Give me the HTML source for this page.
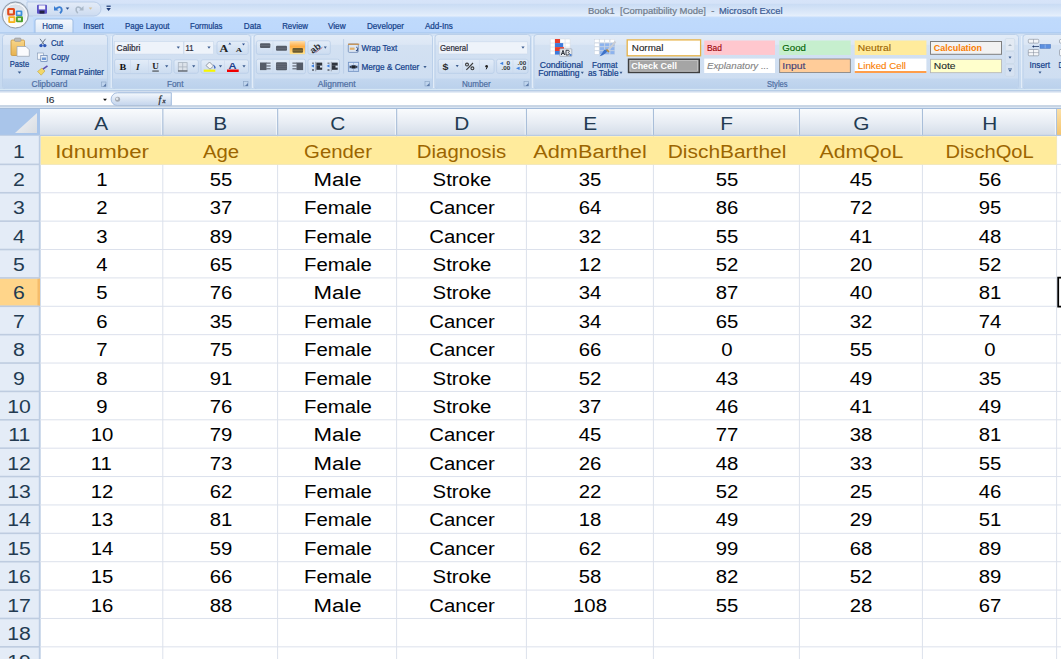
<!DOCTYPE html><html><head><meta charset="utf-8"><style>
*{margin:0;padding:0;box-sizing:border-box}
html,body{width:1061px;height:659px;overflow:hidden;background:#fff;font-family:"Liberation Sans",sans-serif}
.b{position:absolute}
.t{position:absolute;white-space:nowrap;line-height:1;transform-origin:0 0}
svg{position:absolute;left:0;top:0}
svg text{font-family:"Liberation Sans",sans-serif;white-space:pre}
</style></head><body><svg width="1061" height="109" style="left:0;top:0"><defs>
<linearGradient id="gTitle" x1="0" y1="0" x2="0" y2="1"><stop offset="0" stop-color="#D7E4F9"/><stop offset="0.2" stop-color="#D5E3F8"/><stop offset="0.27" stop-color="#CADCF4"/><stop offset="0.85" stop-color="#DFEBFA"/><stop offset="1" stop-color="#E7F0FC"/></linearGradient>
<linearGradient id="gTabs" x1="0" y1="0" x2="0" y2="1"><stop offset="0" stop-color="#C9DFFB"/><stop offset="0.15" stop-color="#BFDAFC"/><stop offset="1" stop-color="#BDD8FC"/></linearGradient>
<linearGradient id="gRib" x1="0" y1="0" x2="0" y2="1"><stop offset="0" stop-color="#D4E3F5"/><stop offset="1" stop-color="#C4D8EF"/></linearGradient>
<linearGradient id="gGrp" x1="0" y1="0" x2="0" y2="1"><stop offset="0" stop-color="#E3ECF7"/><stop offset="0.18" stop-color="#DCE7F5"/><stop offset="0.2" stop-color="#D3E1F2"/><stop offset="1" stop-color="#CDDDF1"/></linearGradient>
<linearGradient id="gLbl" x1="0" y1="0" x2="0" y2="1"><stop offset="0" stop-color="#C3D7EF"/><stop offset="1" stop-color="#BBD1EC"/></linearGradient>
<linearGradient id="gHomeTab" x1="0" y1="0" x2="0" y2="1"><stop offset="0" stop-color="#F4F8FD"/><stop offset="1" stop-color="#DCE8F6"/></linearGradient>
<linearGradient id="gBtn" x1="0" y1="0" x2="0" y2="1"><stop offset="0" stop-color="#E4EDF8"/><stop offset="0.5" stop-color="#D7E4F4"/><stop offset="1" stop-color="#CCDCF0"/></linearGradient>
<linearGradient id="gOrange" x1="0" y1="0" x2="0" y2="1"><stop offset="0" stop-color="#FFDCA6"/><stop offset="0.42" stop-color="#FFAE45"/><stop offset="1" stop-color="#FFE592"/></linearGradient>
<linearGradient id="gPill" x1="0" y1="0" x2="0" y2="1"><stop offset="0" stop-color="#F4F8FD"/><stop offset="1" stop-color="#C3D4EC"/></linearGradient>
<linearGradient id="gQat" x1="0" y1="0" x2="0" y2="1"><stop offset="0" stop-color="#E4ECF8"/><stop offset="1" stop-color="#CCDBF0"/></linearGradient>
<linearGradient id="gOff" x1="0" y1="0" x2="0" y2="1"><stop offset="0" stop-color="#D4DBE4"/><stop offset="0.5" stop-color="#E8ECF1"/><stop offset="1" stop-color="#FAFBFC"/></linearGradient>
<linearGradient id="gClip" x1="0" y1="0" x2="0" y2="1"><stop offset="0" stop-color="#F8D68A"/><stop offset="1" stop-color="#E7B24F"/></linearGradient>
</defs>
<rect x="0" y="0" width="1061" height="16.3" fill="url(#gTitle)"/>
<rect x="0" y="16.3" width="1061" height="17" fill="url(#gTabs)"/>
<path d="M0,0 H28 Q33,4 33,17 V33 H0 Z" fill="#C9DEF8"/>
<path d="M0,0 H26 Q31,3 31,16 H0 Z" fill="#DDE8F7"/>
<path d="M27,2 H94 A7,7 0 0 1 94,16 H27 Z" fill="url(#gQat)" stroke="#B3C8E4" stroke-width="0.8"/>
<circle cx="15.3" cy="15" r="13.8" fill="#B4C2D3" opacity="0.55"/>
<circle cx="15.3" cy="15" r="13" fill="url(#gOff)" stroke="#8F9BAA" stroke-width="1"/>
<circle cx="15.3" cy="15.2" r="11.4" fill="none" stroke="#FFFFFF" stroke-width="1"/>
<ellipse cx="15.3" cy="21" rx="9" ry="4.5" fill="#FFFFFF" opacity="0.5"/>
<rect x="7.2" y="8" width="7.8" height="7.6" rx="1.6" fill="#E0491A"/>
<rect x="9.3" y="10" width="3.6" height="3.5" fill="#F2E7DF"/>
<rect x="15.8" y="10.5" width="6.6" height="5.6" rx="1.2" fill="#3C8FD8"/>
<rect x="17.4" y="12" width="3.2" height="2.6" fill="#DDEBF6"/>
<rect x="8.3" y="16.3" width="7.2" height="6.8" rx="1.4" fill="#F7B21C"/>
<rect x="10" y="18" width="3.6" height="3.2" fill="#FBF0D2"/>
<rect x="16" y="16.3" width="7" height="6" rx="1.2" fill="#4CA02C"/>
<rect x="17.8" y="18" width="3.2" height="2.6" fill="#DDEFD6"/>
<rect x="37" y="4.7" width="10" height="9" rx="1" fill="#5B52C6"/>
<rect x="38.8" y="5.4" width="6.4" height="4" fill="#F2F2FA"/>
<rect x="39.5" y="10.6" width="5" height="3" fill="#222244"/>
<path d="M54,6 L54,10.5 L58.5,10.5 Z" fill="#3C7FD2"/><path d="M56,8.8 Q60,5.5 61.5,8.5 Q62.5,11 60,13.2" fill="none" stroke="#3C7FD2" stroke-width="1.8"/>
<polygon points="65.7,7.5 69.3,7.5 67.5,9.7" fill="#2C4F8A"/>
<path d="M83.5,6 L83.5,10.5 L79,10.5 Z" fill="#A9B8C8"/><path d="M81.5,8.8 Q77.5,5.5 76.2,8.5 Q75.5,11 77.8,13.2" fill="none" stroke="#A9B8C8" stroke-width="1.6"/>
<polygon points="88.7,7.5 92.3,7.5 90.5,9.7" fill="#D6C29A"/>
<rect x="106.5" y="5.6" width="4.2" height="1.2" fill="#1F3C78"/><polygon points="106.3,8 110.9,8 108.6,11" fill="#1F3C78"/>
<text x="588.0" y="13.9" font-size="9.6" fill="#707C8C" stroke="#707C8C" stroke-width="0.22" font-weight="normal" font-style="normal" textLength="129.0" lengthAdjust="spacingAndGlyphs">Book1  [Compatibility Mode]  - </text>
<text x="719.0" y="13.9" font-size="9.6" fill="#3C5C93" stroke="#3C5C93" stroke-width="0.22" font-weight="normal" font-style="normal" textLength="63.5" lengthAdjust="spacingAndGlyphs">Microsoft Excel</text>
<path d="M35,33 V21 Q35,19 37,19 H71 Q73,19 73,21 V33" fill="url(#gHomeTab)" stroke="#9DBCE3" stroke-width="1"/>
<text x="42.3" y="28.6" font-size="8.2" fill="#15428B" stroke="#15428B" stroke-width="0.22" font-weight="normal" font-style="normal" textLength="20.8" lengthAdjust="spacingAndGlyphs">Home</text>
<text x="83.3" y="28.6" font-size="8.2" fill="#15428B" stroke="#15428B" stroke-width="0.22" font-weight="normal" font-style="normal" textLength="20.5" lengthAdjust="spacingAndGlyphs">Insert</text>
<text x="125.0" y="28.6" font-size="8.2" fill="#15428B" stroke="#15428B" stroke-width="0.22" font-weight="normal" font-style="normal" textLength="44.5" lengthAdjust="spacingAndGlyphs">Page Layout</text>
<text x="190.0" y="28.6" font-size="8.2" fill="#15428B" stroke="#15428B" stroke-width="0.22" font-weight="normal" font-style="normal" textLength="32.5" lengthAdjust="spacingAndGlyphs">Formulas</text>
<text x="243.8" y="28.6" font-size="8.2" fill="#15428B" stroke="#15428B" stroke-width="0.22" font-weight="normal" font-style="normal" textLength="17.2" lengthAdjust="spacingAndGlyphs">Data</text>
<text x="282.2" y="28.6" font-size="8.2" fill="#15428B" stroke="#15428B" stroke-width="0.22" font-weight="normal" font-style="normal" textLength="25.8" lengthAdjust="spacingAndGlyphs">Review</text>
<text x="327.9" y="28.6" font-size="8.2" fill="#15428B" stroke="#15428B" stroke-width="0.22" font-weight="normal" font-style="normal" textLength="17.7" lengthAdjust="spacingAndGlyphs">View</text>
<text x="367.0" y="28.6" font-size="8.2" fill="#15428B" stroke="#15428B" stroke-width="0.22" font-weight="normal" font-style="normal" textLength="36.9" lengthAdjust="spacingAndGlyphs">Developer</text>
<text x="424.9" y="28.6" font-size="8.2" fill="#15428B" stroke="#15428B" stroke-width="0.22" font-weight="normal" font-style="normal" textLength="27.9" lengthAdjust="spacingAndGlyphs">Add-Ins</text>
<rect x="0" y="33" width="1061" height="58" fill="url(#gRib)"/>
<rect x="0" y="32.4" width="1061" height="1.1" fill="#A6C5EC"/>
<rect x="2.5" y="34.5" width="105" height="54.5" rx="3" fill="url(#gGrp)" stroke="#BBD0EA" stroke-width="1"/>
<path d="M3,78.5 H107 V86 Q107,88.5 104.5,88.5 H5.5 Q3,88.5 3,86 Z" fill="url(#gLbl)"/>
<rect x="112.5" y="34.5" width="138" height="54.5" rx="3" fill="url(#gGrp)" stroke="#BBD0EA" stroke-width="1"/>
<path d="M113,78.5 H250 V86 Q250,88.5 247.5,88.5 H115.5 Q113,88.5 113,86 Z" fill="url(#gLbl)"/>
<rect x="254.0" y="34.5" width="178.5" height="54.5" rx="3" fill="url(#gGrp)" stroke="#BBD0EA" stroke-width="1"/>
<path d="M254.5,78.5 H432 V86 Q432,88.5 429.5,88.5 H257.0 Q254.5,88.5 254.5,86 Z" fill="url(#gLbl)"/>
<rect x="435.0" y="34.5" width="95.5" height="54.5" rx="3" fill="url(#gGrp)" stroke="#BBD0EA" stroke-width="1"/>
<path d="M435.5,78.5 H530 V86 Q530,88.5 527.5,88.5 H438.0 Q435.5,88.5 435.5,86 Z" fill="url(#gLbl)"/>
<rect x="534.0" y="34.5" width="484.5" height="54.5" rx="3" fill="url(#gGrp)" stroke="#BBD0EA" stroke-width="1"/>
<path d="M534.5,78.5 H1018 V86 Q1018,88.5 1015.5,88.5 H537.0 Q534.5,88.5 534.5,86 Z" fill="url(#gLbl)"/>
<rect x="1023.0" y="34.5" width="66.5" height="54.5" rx="3" fill="url(#gGrp)" stroke="#BBD0EA" stroke-width="1"/>
<path d="M1023.5,78.5 H1089 V86 Q1089,88.5 1086.5,88.5 H1026.0 Q1023.5,88.5 1023.5,86 Z" fill="url(#gLbl)"/>
<rect x="110.7" y="36" width="1" height="52" fill="#EEF5FC" opacity="0.85"/>
<rect x="252.2" y="36" width="1" height="52" fill="#EEF5FC" opacity="0.85"/>
<rect x="433.2" y="36" width="1" height="52" fill="#EEF5FC" opacity="0.85"/>
<rect x="532.2" y="36" width="1" height="52" fill="#EEF5FC" opacity="0.85"/>
<rect x="1021.2" y="36" width="1" height="52" fill="#EEF5FC" opacity="0.85"/>
<rect x="0" y="89" width="1061" height="1.5" fill="#D7E8F5"/>
<rect x="0" y="90.5" width="1061" height="1" fill="#9DB8DA"/>
<text x="31.6" y="87.2" font-size="8.4" fill="#4F6FA3" stroke="#4F6FA3" stroke-width="0.22" font-weight="normal" font-style="normal" textLength="35.8" lengthAdjust="spacingAndGlyphs">Clipboard</text>
<rect x="101.5" y="82" width="4.5" height="4.5" fill="none" stroke="#8FA8C8" stroke-width="0.7"/><polygon points="103.0,86.5 106.0,86.5 106.0,83.5" fill="#5D7AA8"/>
<rect x="11" y="40" width="13.5" height="15.5" rx="1.2" fill="url(#gClip)" stroke="#C9963B" stroke-width="0.8"/>
<rect x="14.5" y="38" width="6.5" height="3.4" rx="1" fill="#B9B9B9" stroke="#8A8A8A" stroke-width="0.5"/>
<path d="M17,46.5 H26 L29.3,49.8 V56.3 H17 Z" fill="#FAFBFD" stroke="#9EA8B6" stroke-width="0.8"/>
<text x="9.8" y="67.4" font-size="8.2" fill="#15428B" stroke="#15428B" stroke-width="0.22" font-weight="normal" font-style="normal" textLength="19.4" lengthAdjust="spacingAndGlyphs">Paste</text>
<polygon points="17.7,71.5 21.3,71.5 19.5,73.7" fill="#3B5C8F"/>
<path d="M40,38.8 L44.5,45 M45.5,38.8 L41,45" stroke="#6C7A8C" stroke-width="1"/>
<circle cx="41" cy="45.6" r="1.7" fill="#2D57B8"/><circle cx="44.8" cy="45.6" r="1.7" fill="#2D57B8"/>
<text x="50.9" y="46.2" font-size="8.2" fill="#15428B" stroke="#15428B" stroke-width="0.22" font-weight="normal" font-style="normal" textLength="12.2" lengthAdjust="spacingAndGlyphs">Cut</text>
<rect x="37.3" y="53" width="6" height="6.2" fill="#F4F7FB" stroke="#7E93B2" stroke-width="0.6"/>
<rect x="40.8" y="55.3" width="6.3" height="6" fill="#E9F0F8" stroke="#4C6EA6" stroke-width="0.6"/>
<rect x="42" y="57.5" width="4" height="2.5" fill="#6E98D6"/>
<text x="51.0" y="59.6" font-size="8.2" fill="#15428B" stroke="#15428B" stroke-width="0.22" font-weight="normal" font-style="normal" textLength="18.3" lengthAdjust="spacingAndGlyphs">Copy</text>
<path d="M37.5,71.5 L42,68 L45,71 L41.2,75.2 Z" fill="#F3D768" stroke="#B39A3B" stroke-width="0.5"/>
<path d="M43,69.2 L47.5,65.8" stroke="#5B4FB0" stroke-width="1.6"/>
<text x="51.0" y="74.6" font-size="8.2" fill="#15428B" stroke="#15428B" stroke-width="0.22" font-weight="normal" font-style="normal" textLength="53.0" lengthAdjust="spacingAndGlyphs">Format Painter</text>
<text x="167.0" y="87.0" font-size="8.4" fill="#4F6FA3" stroke="#4F6FA3" stroke-width="0.22" font-weight="normal" font-style="normal" textLength="16.5" lengthAdjust="spacingAndGlyphs">Font</text>
<rect x="243.5" y="81.5" width="4.5" height="4.5" fill="none" stroke="#8FA8C8" stroke-width="0.7"/><polygon points="245.0,86.0 248.0,86.0 248.0,83.0" fill="#5D7AA8"/>
<rect x="114.6" y="41.6" width="69" height="12.5" fill="#EEF3FA" stroke="#C9D8EB" stroke-width="0.6"/>
<rect x="184" y="41.6" width="29.5" height="12.5" fill="#EEF3FA" stroke="#C9D8EB" stroke-width="0.6"/>
<text x="116.6" y="50.8" font-size="8.2" fill="#2E2E3A" stroke="#2E2E3A" stroke-width="0.22" font-weight="normal" font-style="normal" textLength="23.7" lengthAdjust="spacingAndGlyphs">Calibri</text>
<text x="185.5" y="50.8" font-size="8.2" fill="#2E2E3A" stroke="#2E2E3A" stroke-width="0.22" font-weight="normal" font-style="normal" textLength="8.0" lengthAdjust="spacingAndGlyphs">11</text>
<polygon points="176.7,46.6 179.9,46.6 178.3,48.8" fill="#3B5C8F"/>
<polygon points="207.4,46.6 210.6,46.6 209.0,48.8" fill="#3B5C8F"/>
<rect x="217" y="41.3" width="31.2" height="13.2" rx="2" fill="url(#gBtn)" stroke="#B8CCE6" stroke-width="0.7"/>
<text x="219.6" y="51.9" font-size="9.6" font-weight="bold" fill="#222" style="font-family:Liberation Serif" textLength="8.8" lengthAdjust="spacingAndGlyphs">A</text>
<polygon points="228.3,44.4 231.3,44.4 229.8,42.6" fill="#2B4E8E"/>
<text x="235.8" y="51.9" font-size="6.8" font-weight="bold" fill="#222" style="font-family:Liberation Serif" textLength="6.4" lengthAdjust="spacingAndGlyphs">A</text>
<polygon points="242,43.6 245,43.6 243.5,45.4" fill="#2B4E8E"/>
<rect x="114.6" y="59.4" width="57" height="14.2" rx="2" fill="url(#gBtn)" stroke="#B6CCE6" stroke-width="0.7"/>
<line x1="130.5" y1="60" x2="130.5" y2="73" stroke="#CBD9EC" stroke-width="0.6"/><line x1="148.5" y1="60" x2="148.5" y2="73" stroke="#CBD9EC" stroke-width="0.6"/>
<text x="119.5" y="69.6" font-size="9.2" font-weight="bold" fill="#111" style="font-family:Liberation Serif" textLength="6.8" lengthAdjust="spacingAndGlyphs">B</text>
<text x="136" y="69.6" font-size="9.2" font-weight="bold" font-style="italic" fill="#222" style="font-family:Liberation Serif">I</text>
<text x="152.3" y="69.4" font-size="9" font-weight="bold" fill="#222" style="font-family:Liberation Serif" textLength="6.5" lengthAdjust="spacingAndGlyphs">U</text>
<rect x="152.3" y="70.6" width="6.5" height="0.9" fill="#222"/>
<polygon points="165.1,65.2 168.3,65.2 166.7,67.4" fill="#3B5C8F"/>
<rect x="174" y="59.8" width="24.4" height="13.5" rx="2" fill="url(#gBtn)" stroke="#B6CCE6" stroke-width="0.7"/>
<rect x="178.3" y="62.6" width="8.8" height="8.6" fill="#DDE3EA" stroke="#A9B3BF" stroke-width="0.8"/><line x1="182.7" y1="62.6" x2="182.7" y2="71" stroke="#A9B3BF" stroke-width="0.8"/><line x1="178.3" y1="66.9" x2="187" y2="66.9" stroke="#A9B3BF" stroke-width="0.8"/><rect x="178" y="70.3" width="9.4" height="1.3" fill="#5F6670"/>
<polygon points="192.1,65.2 195.3,65.2 193.7,67.4" fill="#3B5C8F"/>
<rect x="201" y="59.8" width="47.5" height="13.5" rx="2" fill="url(#gBtn)" stroke="#B6CCE6" stroke-width="0.7"/>
<line x1="224.5" y1="60.3" x2="224.5" y2="73" stroke="#CBD9EC" stroke-width="0.6"/>
<path d="M206,65.5 L209.5,62 L213.5,66 L210,69.2 Z" fill="#F4F6F8" stroke="#7D8792" stroke-width="0.8"/><path d="M213.5,65.2 Q216,66.5 214.8,68.6" fill="#2F5DB8" stroke="#2F5DB8" stroke-width="1"/>
<rect x="203.7" y="69.6" width="11.6" height="2.2" fill="#F5F500"/>
<polygon points="218.9,65.2 222.1,65.2 220.5,67.4" fill="#3B5C8F"/>
<text x="228.5" y="69.3" font-size="9.6" font-weight="bold" fill="#1F3F8A" textLength="8" lengthAdjust="spacingAndGlyphs">A</text>
<rect x="227" y="69.5" width="11.7" height="2.5" fill="#F00000"/>
<polygon points="242.4,65.2 245.6,65.2 244.0,67.4" fill="#3B5C8F"/>
<text x="317.7" y="87.0" font-size="8.4" fill="#4F6FA3" stroke="#4F6FA3" stroke-width="0.22" font-weight="normal" font-style="normal" textLength="38.0" lengthAdjust="spacingAndGlyphs">Alignment</text>
<rect x="425" y="81.5" width="4.5" height="4.5" fill="none" stroke="#8FA8C8" stroke-width="0.7"/><polygon points="426.5,86.0 429.5,86.0 429.5,83.0" fill="#5D7AA8"/>
<rect x="256.4" y="40.8" width="49.1" height="13.6" rx="2" fill="url(#gBtn)" stroke="#B6CCE6" stroke-width="0.7"/>
<line x1="273" y1="41.5" x2="273" y2="54" stroke="#CBD9EC" stroke-width="0.6"/>
<rect x="289.7" y="41.1" width="15.3" height="13.1" fill="url(#gOrange)"/>
<rect x="308" y="40.8" width="22.3" height="13.6" rx="2" fill="url(#gBtn)" stroke="#B6CCE6" stroke-width="0.7"/>
<rect x="260.0" y="43.2" width="10.3" height="4.8" rx="1" fill="#555C68"/>
<rect x="259.7" y="45.25" width="10.9" height="0.5" fill="#8E96A3" opacity="0.55"/>
<rect x="276.0" y="45.8" width="11.0" height="4.9" rx="1" fill="#555C68"/>
<rect x="275.7" y="47.90" width="11.6" height="0.5" fill="#8E96A3" opacity="0.55"/>
<rect x="292.5" y="48.0" width="10.5" height="4.7" rx="1" fill="#6A5B30"/>
<rect x="292.2" y="50.00" width="11.1" height="0.5" fill="#B9964F" opacity="0.55"/>
<g transform="rotate(-38 316 47.5)"><text x="309.6" y="50.6" font-size="8.8" font-weight="bold" fill="#2A2E36" textLength="11" lengthAdjust="spacingAndGlyphs">ab</text></g>
<line x1="315.5" y1="52.6" x2="322.3" y2="47.4" stroke="#9A5060" stroke-width="0.8"/>
<polygon points="323.8,46.5 326.8,46.5 325.3,48.7" fill="#3B5C8F"/>
<rect x="256.4" y="59.2" width="49.1" height="14.5" rx="2" fill="url(#gBtn)" stroke="#B6CCE6" stroke-width="0.7"/>
<line x1="273" y1="60" x2="273" y2="73" stroke="#CBD9EC" stroke-width="0.6"/><line x1="289.5" y1="60" x2="289.5" y2="73" stroke="#CBD9EC" stroke-width="0.6"/>
<rect x="308" y="59.2" width="31.5" height="14.5" rx="2" fill="url(#gBtn)" stroke="#B6CCE6" stroke-width="0.7"/>
<line x1="324" y1="60" x2="324" y2="73" stroke="#CBD9EC" stroke-width="0.6"/>
<rect x="260" y="62.5" width="6.5" height="7.6" fill="#555C68"/><rect x="266" y="62.5" width="4.6" height="1.3" fill="#6F7682"/><rect x="266" y="65.3" width="4.6" height="1.3" fill="#6F7682"/><rect x="266" y="68.1" width="4.6" height="1.3" fill="#6F7682"/>
<rect x="276.0" y="62.3" width="11.0" height="7.9" rx="1" fill="#555C68"/>
<rect x="275.7" y="63.92" width="11.6" height="0.5" fill="#8E96A3" opacity="0.55"/>
<rect x="275.7" y="65.90" width="11.6" height="0.5" fill="#8E96A3" opacity="0.55"/>
<rect x="275.7" y="67.88" width="11.6" height="0.5" fill="#8E96A3" opacity="0.55"/>
<rect x="296.5" y="62.5" width="6.6" height="7.6" fill="#555C68"/><rect x="292.4" y="62.5" width="4.6" height="1.3" fill="#6F7682"/><rect x="292.4" y="65.3" width="4.6" height="1.3" fill="#6F7682"/><rect x="292.4" y="68.1" width="4.6" height="1.3" fill="#6F7682"/>
<rect x="315.3" y="61.8" width="0.9" height="9.5" fill="#8A929E"/>
<rect x="316.4" y="62.6" width="5.8" height="7.2" fill="#30353E"/><rect x="320" y="65.6" width="2.4" height="2" fill="#D8E3F2"/><rect x="316.2" y="65.2" width="6" height="0.5" fill="#8A929E" opacity="0.6"/>
<rect x="312" y="62.6" width="2" height="1.2" fill="#6F7682"/><rect x="312" y="69.3" width="2" height="1.4" fill="#4F5560"/>
<polygon points="311,65.9 314,64.3 314,67.5" fill="#3C7FE0"/>
<rect x="330.8" y="61.8" width="0.9" height="9.5" fill="#8A929E"/>
<rect x="331.9" y="62.6" width="5.8" height="7.2" fill="#30353E"/><rect x="335.5" y="65.6" width="2.4" height="2" fill="#D8E3F2"/><rect x="331.7" y="65.2" width="6" height="0.5" fill="#8A929E" opacity="0.6"/>
<rect x="327.5" y="62.6" width="2" height="1.2" fill="#6F7682"/><rect x="327.5" y="69.3" width="2" height="1.4" fill="#4F5560"/>
<polygon points="326.5,65.9 329.5,64.3 329.5,67.5" fill="#3C7FE0"/>
<line x1="343.6" y1="39" x2="343.6" y2="73.6" stroke="#B5CAE4" stroke-width="0.8"/>
<rect x="348.3" y="44" width="10" height="8.4" rx="1" fill="#DCE6F2" stroke="#5E7DAF" stroke-width="0.7"/>
<rect x="348" y="43.6" width="11.2" height="1.3" fill="#C9924E"/><rect x="349.8" y="47.6" width="4.8" height="2.2" fill="#E2B06A"/>
<path d="M356.2,47 Q359.2,48 357,50.6" stroke="#233F7A" fill="none" stroke-width="0.9"/><polygon points="355.6,50.6 357.6,49.4 357.6,51.8" fill="#233F7A"/>
<text x="361.5" y="51.3" font-size="8.4" fill="#15428B" stroke="#15428B" stroke-width="0.22" font-weight="normal" font-style="normal" textLength="35.8" lengthAdjust="spacingAndGlyphs">Wrap Text</text>
<rect x="348.3" y="62.2" width="10.4" height="9.2" fill="#A9C3E8" stroke="#6E8EC0" stroke-width="0.7"/>
<rect x="349" y="63" width="9" height="1.8" fill="#DCE7F6"/><rect x="349" y="69" width="9" height="1.8" fill="#C6D8F0"/><line x1="353.5" y1="62.5" x2="353.5" y2="64.8" stroke="#7F9CC8" stroke-width="0.5"/><line x1="353.5" y1="68.8" x2="353.5" y2="71" stroke="#7F9CC8" stroke-width="0.5"/>
<rect x="351.8" y="65.3" width="3.6" height="3.2" fill="#1E222A"/><polygon points="349,66.9 351.6,65.5 351.6,68.3" fill="#1E222A"/><polygon points="358,66.9 355.4,65.5 355.4,68.3" fill="#1E222A"/>
<text x="361.5" y="70.2" font-size="8.4" fill="#15428B" stroke="#15428B" stroke-width="0.22" font-weight="normal" font-style="normal" textLength="57.7" lengthAdjust="spacingAndGlyphs">Merge &amp; Center</text>
<polygon points="423.4,66.0 426.6,66.0 425.0,68.2" fill="#3B5C8F"/>
<text x="462.0" y="86.6" font-size="8.4" fill="#4F6FA3" stroke="#4F6FA3" stroke-width="0.22" font-weight="normal" font-style="normal" textLength="28.7" lengthAdjust="spacingAndGlyphs">Number</text>
<rect x="524" y="81.5" width="4.5" height="4.5" fill="none" stroke="#8FA8C8" stroke-width="0.7"/><polygon points="525.5,86.0 528.5,86.0 528.5,83.0" fill="#5D7AA8"/>
<rect x="438.3" y="41.8" width="89.3" height="12.2" fill="#EEF3FA" stroke="#C9D8EB" stroke-width="0.6"/>
<text x="440.0" y="51.0" font-size="8.2" fill="#2E2E3A" stroke="#2E2E3A" stroke-width="0.22" font-weight="normal" font-style="normal" textLength="28.0" lengthAdjust="spacingAndGlyphs">General</text>
<polygon points="521.4,46.6 524.6,46.6 523.0,48.8" fill="#3B5C8F"/>
<rect x="438.3" y="59.3" width="55.8" height="14.1" rx="2" fill="url(#gBtn)" stroke="#B6CCE6" stroke-width="0.7"/>
<line x1="462.5" y1="60" x2="462.5" y2="73" stroke="#CBD9EC" stroke-width="0.6"/><line x1="479.5" y1="60" x2="479.5" y2="73" stroke="#CBD9EC" stroke-width="0.6"/>
<text x="442.4" y="70.2" font-size="8.8" fill="#2A2A2A" stroke="#2A2A2A" stroke-width="0" font-weight="bold" font-style="normal" textLength="5.9" lengthAdjust="spacingAndGlyphs">$</text>
<polygon points="455.7,65.0 458.7,65.0 457.2,67.2" fill="#3B5C8F"/>
<circle cx="467" cy="64.6" r="1.45" fill="none" stroke="#3A3A3A" stroke-width="1.1"/><circle cx="472.4" cy="68.3" r="1.45" fill="none" stroke="#3A3A3A" stroke-width="1.1"/><line x1="473" y1="63" x2="466.4" y2="69.8" stroke="#3A3A3A" stroke-width="1.1"/>
<circle cx="486.6" cy="66.3" r="1.3" fill="#222"/><path d="M487.4,66.6 L486.2,69.3" stroke="#222" stroke-width="1"/>
<rect x="496.6" y="59.3" width="31.4" height="14.1" rx="2" fill="url(#gBtn)" stroke="#B6CCE6" stroke-width="0.7"/>
<line x1="513" y1="60" x2="513" y2="73" stroke="#CBD9EC" stroke-width="0.6"/>
<polygon points="499.8,63.4 503.2,61.8 503.2,65" fill="#3C7FE0"/><text x="506.4" y="65.4" font-size="4.6" font-weight="bold" fill="#333" textLength="3.6" lengthAdjust="spacingAndGlyphs">0</text><text x="501.5" y="70.2" font-size="4.6" font-weight="bold" fill="#333" textLength="8.8" lengthAdjust="spacingAndGlyphs">.00</text>
<text x="517.6" y="65.2" font-size="4.6" font-weight="bold" fill="#333" textLength="8.8" lengthAdjust="spacingAndGlyphs">.00</text><polygon points="516,68.3 519.6,66.7 519.6,69.9" fill="#3C7FE0"/><text x="520.5" y="70.2" font-size="4.6" font-weight="bold" fill="#333" textLength="5.8" lengthAdjust="spacingAndGlyphs">.0</text>
<text x="767.0" y="87.4" font-size="8.2" fill="#4F6FA3" stroke="#4F6FA3" stroke-width="0.22" font-weight="normal" font-style="normal" textLength="20.5" lengthAdjust="spacingAndGlyphs">Styles</text>
<rect x="550.3" y="39" width="19.9" height="15.6" rx="0.8" fill="#FFFFFF" stroke="#D3D9E1" stroke-width="0.5"/>
<line x1="554.9" y1="39" x2="554.9" y2="54.6" stroke="#D3D9E1" stroke-width="0.6"/>
<line x1="560" y1="39" x2="560" y2="54.6" stroke="#D3D9E1" stroke-width="0.6"/>
<line x1="565.1" y1="39" x2="565.1" y2="54.6" stroke="#D3D9E1" stroke-width="0.6"/>
<line x1="550.3" y1="43.1" x2="570.2" y2="43.1" stroke="#D3D9E1" stroke-width="0.6"/>
<line x1="550.3" y1="47.1" x2="570.2" y2="47.1" stroke="#D3D9E1" stroke-width="0.6"/>
<line x1="550.3" y1="51" x2="570.2" y2="51" stroke="#D3D9E1" stroke-width="0.6"/>
<rect x="555" y="39" width="5" height="4.1" fill="#E8402F"/>
<rect x="555" y="43.1" width="8.2" height="4" fill="#3F7BDB"/>
<rect x="555" y="47.1" width="9" height="3.9" fill="#E8402F"/>
<rect x="555" y="51" width="5" height="3.6" fill="#3F7BDB"/>
<rect x="559.8" y="48.8" width="12" height="7.6" rx="0.6" fill="#E9ECF0" stroke="#8C96A4" stroke-width="0.6"/>
<path d="M561.3,55 L563,50.3 L564.6,55 M562,53.4 H564" stroke="#2A2F38" stroke-width="1" fill="none"/><path d="M566,50.3 H568.6 Q570,51.5 568.4,52.6 Q570.3,53.8 568.6,55 H566 Z" fill="none" stroke="#2A2F38" stroke-width="0.9"/><rect x="569.5" y="54" width="2" height="2" fill="#4A7FD0"/>
<text x="539.7" y="67.5" font-size="8.4" fill="#15428B" stroke="#15428B" stroke-width="0.22" font-weight="normal" font-style="normal" textLength="43.3" lengthAdjust="spacingAndGlyphs">Conditional</text>
<text x="538.3" y="75.6" font-size="8.4" fill="#15428B" stroke="#15428B" stroke-width="0.22" font-weight="normal" font-style="normal" textLength="41.2" lengthAdjust="spacingAndGlyphs">Formatting</text>
<polygon points="580.8,71.8 583.8,71.8 582.3,74.0" fill="#3B5C8F"/>
<rect x="594.5" y="39.2" width="4.6" height="3.4" fill="#FFFFFF" stroke="#C5CFDC" stroke-width="0.4"/>
<rect x="599.7" y="39.2" width="4.6" height="3.4" fill="#FFFFFF" stroke="#C5CFDC" stroke-width="0.4"/>
<rect x="604.9" y="39.2" width="4.6" height="3.4" fill="#FFFFFF" stroke="#C5CFDC" stroke-width="0.4"/>
<rect x="610.1" y="39.2" width="4.6" height="3.4" fill="#FFFFFF" stroke="#C5CFDC" stroke-width="0.4"/>
<rect x="594.5" y="43.1" width="4.6" height="3.4" fill="#FFFFFF" stroke="#C5CFDC" stroke-width="0.4"/>
<rect x="599.7" y="43.1" width="4.6" height="3.4" fill="#8DB3EE" stroke="#C5CFDC" stroke-width="0.4"/>
<rect x="604.9" y="43.1" width="4.6" height="3.4" fill="#8DB3EE" stroke="#C5CFDC" stroke-width="0.4"/>
<rect x="610.1" y="43.1" width="4.6" height="3.4" fill="#8DB3EE" stroke="#C5CFDC" stroke-width="0.4"/>
<rect x="594.5" y="47.0" width="4.6" height="3.4" fill="#FFFFFF" stroke="#C5CFDC" stroke-width="0.4"/>
<rect x="599.7" y="47.0" width="4.6" height="3.4" fill="#8DB3EE" stroke="#C5CFDC" stroke-width="0.4"/>
<rect x="604.9" y="47.0" width="4.6" height="3.4" fill="#8DB3EE" stroke="#C5CFDC" stroke-width="0.4"/>
<rect x="610.1" y="47.0" width="4.6" height="3.4" fill="#8DB3EE" stroke="#C5CFDC" stroke-width="0.4"/>
<rect x="594.5" y="50.9" width="4.6" height="3.4" fill="#FFFFFF" stroke="#C5CFDC" stroke-width="0.4"/>
<rect x="599.7" y="50.9" width="4.6" height="3.4" fill="#8DB3EE" stroke="#C5CFDC" stroke-width="0.4"/>
<rect x="604.9" y="50.9" width="4.6" height="3.4" fill="#8DB3EE" stroke="#C5CFDC" stroke-width="0.4"/>
<rect x="610.1" y="50.9" width="4.6" height="3.4" fill="#8DB3EE" stroke="#C5CFDC" stroke-width="0.4"/>
<path d="M615.5,41.5 L607.5,51" stroke="#C9CDD4" stroke-width="2"/><path d="M608.5,50 L605,53.8 Q602,56 599.5,56.3 Q602.5,53 604.2,49.8 Z" fill="#3E72C8"/><path d="M606.5,49.5 L609,52" stroke="#B98A3A" stroke-width="1.6"/>
<text x="592.0" y="67.5" font-size="8.4" fill="#15428B" stroke="#15428B" stroke-width="0.22" font-weight="normal" font-style="normal" textLength="25.5" lengthAdjust="spacingAndGlyphs">Format</text>
<text x="588.0" y="75.6" font-size="8.4" fill="#15428B" stroke="#15428B" stroke-width="0.22" font-weight="normal" font-style="normal" textLength="30.5" lengthAdjust="spacingAndGlyphs">as Table</text>
<polygon points="619.5,71.8 622.5,71.8 621.0,74.0" fill="#3B5C8F"/>
<rect x="627.2" y="39.9" width="73.4" height="15.9" fill="#FFFFFF" stroke="#E7B347" stroke-width="1.3"/>
<text x="631.8" y="51.0" font-size="8.6" fill="#1B1B1B" stroke="#1B1B1B" stroke-width="0.1" font-weight="normal" font-style="normal" textLength="31.7" lengthAdjust="spacingAndGlyphs">Normal</text>
<rect x="628.5" y="59.2" width="70.8" height="13.3" fill="#A5A5A5" stroke="#3F3F3F" stroke-width="1.4"/>
<rect x="630.0" y="60.6" width="67.8" height="10.5" fill="none" stroke="#E6E6E6" stroke-width="0.4"/>
<text x="631.2" y="68.6" font-size="8.6" fill="#FFFFFF" stroke="#FFFFFF" stroke-width="0" font-weight="bold" font-style="normal" textLength="45.8" lengthAdjust="spacingAndGlyphs">Check Cell</text>
<rect x="704.2" y="40.5" width="70.8" height="14.4" fill="#FFC7CE"/>
<text x="707.0" y="51.0" font-size="8.6" fill="#9C0006" stroke="#9C0006" stroke-width="0.1" font-weight="normal" font-style="normal" textLength="15.0" lengthAdjust="spacingAndGlyphs">Bad</text>
<rect x="704.2" y="58.6" width="70.8" height="14.4" fill="#FFFFFF"/>
<text x="707.0" y="68.6" font-size="8.6" fill="#7F7F7F" stroke="#7F7F7F" stroke-width="0.1" font-weight="normal" font-style="italic" textLength="62.0" lengthAdjust="spacingAndGlyphs">Explanatory ...</text>
<rect x="779.3" y="40.5" width="71.4" height="14.5" fill="#C6EFCE"/>
<text x="782.3" y="51.0" font-size="8.6" fill="#006100" stroke="#006100" stroke-width="0.1" font-weight="normal" font-style="normal" textLength="23.7" lengthAdjust="spacingAndGlyphs">Good</text>
<rect x="779.7" y="59.0" width="70.6" height="13.6" fill="#FFCC99" stroke="#7F7F7F" stroke-width="0.8"/>
<text x="782.3" y="68.6" font-size="8.6" fill="#3F3F76" stroke="#3F3F76" stroke-width="0.1" font-weight="normal" font-style="normal" textLength="23.2" lengthAdjust="spacingAndGlyphs">Input</text>
<rect x="854.7" y="40.5" width="71.7" height="14.5" fill="#FFEB9C"/>
<text x="857.8" y="51.0" font-size="8.6" fill="#9C6500" stroke="#9C6500" stroke-width="0.1" font-weight="normal" font-style="normal" textLength="33.2" lengthAdjust="spacingAndGlyphs">Neutral</text>
<rect x="854.7" y="58.6" width="71.7" height="14.4" fill="#FFFFFF"/>
<rect x="854.7" y="71" width="71.7" height="2" fill="#FF9E4A"/>
<text x="857.8" y="68.6" font-size="8.6" fill="#FA7D00" stroke="#FA7D00" stroke-width="0.1" font-weight="normal" font-style="normal" textLength="48.2" lengthAdjust="spacingAndGlyphs">Linked Cell</text>
<rect x="930.5" y="41.5" width="71.0" height="12.8" fill="#F2F2F2" stroke="#7F7F7F" stroke-width="1"/>
<text x="933.8" y="51.0" font-size="8.6" fill="#FA7D00" stroke="#FA7D00" stroke-width="0" font-weight="bold" font-style="normal" textLength="48.2" lengthAdjust="spacingAndGlyphs">Calculation</text>
<rect x="930.5" y="59.3" width="71.0" height="13.4" fill="#FFFFCC" stroke="#B2B2B2" stroke-width="0.8"/>
<text x="933.8" y="68.6" font-size="8.6" fill="#1B2A2A" stroke="#1B2A2A" stroke-width="0.1" font-weight="normal" font-style="normal" textLength="21.7" lengthAdjust="spacingAndGlyphs">Note</text>
<rect x="1005.2" y="38.5" width="9.5" height="12.2" rx="1.5" fill="#E3EAF3" stroke="#C9D6E6" stroke-width="0.6"/><polygon points="1008,46 1012,46 1010,44" fill="#A7B3C2"/>
<rect x="1005.2" y="51.5" width="9.5" height="12" rx="1.5" fill="#D6E2F2" stroke="#C9D6E6" stroke-width="0.6"/>
<polygon points="1008.5,56.5 1011.5,56.5 1010.0,58.7" fill="#3B5C8F"/>
<rect x="1005.2" y="64.3" width="9.5" height="12" rx="1.5" fill="#D6E2F2" stroke="#C9D6E6" stroke-width="0.6"/><rect x="1008" y="68.5" width="4" height="0.8" fill="#3B5C8F"/>
<polygon points="1008.5,69.8 1011.5,69.8 1010.0,72.0" fill="#3B5C8F"/>
<rect x="1028.3" y="39.3" width="10.5" height="3.8" rx="1" fill="#F4F6F9" stroke="#7D8796" stroke-width="0.6"/><line x1="1033.5" y1="39.3" x2="1033.5" y2="43.1" stroke="#7D8796" stroke-width="0.5"/>
<rect x="1028.3" y="49.5" width="10.5" height="6.3" rx="1" fill="#F4F6F9" stroke="#7D8796" stroke-width="0.6"/><line x1="1028.3" y1="52.6" x2="1038.8" y2="52.6" stroke="#7D8796" stroke-width="0.5"/><line x1="1033.5" y1="49.5" x2="1033.5" y2="55.8" stroke="#7D8796" stroke-width="0.5"/>
<rect x="1040" y="44.5" width="10.5" height="3.8" fill="#5B8FE0" stroke="#3E6CB8" stroke-width="0.5"/><line x1="1045.2" y1="44.5" x2="1045.2" y2="48.3" stroke="#B9D0F2" stroke-width="0.5"/><path d="M1033,46.5 H1039" stroke="#223A6A" stroke-width="0.8"/><polygon points="1032,46.5 1034,45.2 1034,47.8" fill="#223A6A"/>
<text x="1029.5" y="68.2" font-size="8.4" fill="#15428B" stroke="#15428B" stroke-width="0.22" font-weight="normal" font-style="normal" textLength="20.5" lengthAdjust="spacingAndGlyphs">Insert</text>
<polygon points="1038.5,71.6 1041.5,71.6 1040.0,73.8" fill="#3B5C8F"/>
<rect x="1059.5" y="39.5" width="3" height="3.6" rx="1" fill="#F4F6F9" stroke="#7D8796" stroke-width="0.6"/><rect x="1059.5" y="49.5" width="3" height="6.2" rx="1" fill="#F4F6F9" stroke="#7D8796" stroke-width="0.6"/>
<text x="1058.5" y="68.2" font-size="8.4" fill="#15428B" stroke="#15428B" stroke-width="0.22" font-weight="normal" font-style="normal" textLength="4.5" lengthAdjust="spacingAndGlyphs">D</text>
<rect x="0" y="91.5" width="1061" height="15" fill="#D3E0F0"/>
<rect x="0" y="92.6" width="118" height="12.8" fill="#FFFFFF"/>
<rect x="171.5" y="92.6" width="889.5" height="12.8" fill="#FFFFFF"/>
<path d="M117.5,92.8 H171.3 V105.6 H117.5 A6.4,6.4 0 0 1 117.5,92.8 Z" fill="url(#gPill)" stroke="#93B0D8" stroke-width="0.8"/>
<circle cx="117.6" cy="99.3" r="2.5" fill="#A3AAB4"/><circle cx="117.1" cy="98.7" r="1.3" fill="#E2E6EB"/>
<text x="158.6" y="102.6" font-size="9.5" font-style="italic" fill="#2E333B" stroke="#2E333B" stroke-width="0.3" style="font-family:Liberation Serif">f</text><text x="162.6" y="102.8" font-size="6.8" font-style="italic" fill="#2E333B" stroke="#2E333B" stroke-width="0.3" style="font-family:Liberation Serif">x</text>
<polygon points="103,98.8 107,98.8 105,101" fill="#111"/>
<text x="46.0" y="103.2" font-size="8.6" fill="#2A2F38" stroke="#2A2F38" stroke-width="0.1" font-weight="normal" font-style="normal" textLength="8.5" lengthAdjust="spacingAndGlyphs">I6</text>
<rect x="0" y="105.4" width="1061" height="1.4" fill="#B8C7DA"/>
<rect x="0" y="106.8" width="1061" height="1.1" fill="#DCE8F6"/>
<rect x="0" y="107.9" width="1061" height="1.1" fill="#A4BCDA"/></svg>
<svg width="1061" height="551" style="left:0;top:108px"><defs>
<linearGradient id="gColHdr" x1="0" y1="0" x2="0" y2="1"><stop offset="0" stop-color="#F9FBFD"/><stop offset="0.5" stop-color="#E8EDF4"/><stop offset="1" stop-color="#D3DCE8"/></linearGradient>
<linearGradient id="gSelHdr" x1="0" y1="0" x2="0" y2="1"><stop offset="0" stop-color="#FBE0A8"/><stop offset="1" stop-color="#F4C36A"/></linearGradient>
<linearGradient id="gCorner" x1="0" y1="0" x2="1" y2="1"><stop offset="0" stop-color="#F2F4F7"/><stop offset="1" stop-color="#D9DDE3"/></linearGradient>
</defs>
<rect x="0" y="1" width="1061" height="27" fill="url(#gColHdr)"/>
<rect x="0" y="1" width="40" height="27" fill="#A9C5EA"/>
<polygon points="37,5 37,25 15,25" fill="url(#gCorner)"/>
<rect x="161.10000000000002" y="1" width="1.2" height="27" fill="#FAFCFE" opacity="0.7"/>
<rect x="162.3" y="1" width="1.1" height="27" fill="#A9BED9"/>
<rect x="275.90000000000003" y="1" width="1.2" height="27" fill="#FAFCFE" opacity="0.7"/>
<rect x="277.1" y="1" width="1.1" height="27" fill="#A9BED9"/>
<rect x="394.90000000000003" y="1" width="1.2" height="27" fill="#FAFCFE" opacity="0.7"/>
<rect x="396.1" y="1" width="1.1" height="27" fill="#A9BED9"/>
<rect x="524.6999999999999" y="1" width="1.2" height="27" fill="#FAFCFE" opacity="0.7"/>
<rect x="525.9" y="1" width="1.1" height="27" fill="#A9BED9"/>
<rect x="651.6999999999999" y="1" width="1.2" height="27" fill="#FAFCFE" opacity="0.7"/>
<rect x="652.9" y="1" width="1.1" height="27" fill="#A9BED9"/>
<rect x="797.6999999999999" y="1" width="1.2" height="27" fill="#FAFCFE" opacity="0.7"/>
<rect x="798.9" y="1" width="1.1" height="27" fill="#A9BED9"/>
<rect x="920.6999999999999" y="1" width="1.2" height="27" fill="#FAFCFE" opacity="0.7"/>
<rect x="921.9" y="1" width="1.1" height="27" fill="#A9BED9"/>
<rect x="1054.8999999999999" y="1" width="1.2" height="27" fill="#FAFCFE" opacity="0.7"/>
<rect x="1056.1" y="1" width="1.1" height="27" fill="#A9BED9"/>
<rect x="1057" y="1" width="4" height="27" fill="url(#gSelHdr)"/>
<rect x="0" y="26.80000000000001" width="1061" height="1.2" fill="#B9CBE2"/>
<rect x="0" y="27.80000000000001" width="40" height="659" fill="#E4ECF7"/>
<rect x="38.8" y="27.80000000000001" width="1.9" height="659" fill="#BCCDE4"/>
<rect x="0" y="170.40" width="39" height="27.38" fill="#FFD58A"/>
<rect x="37.5" y="170.40" width="2.5" height="27.38" fill="#F5BC6A"/>
<rect x="40" y="55.88" width="1021" height="1" fill="#DCE1EC"/>
<rect x="0" y="55.58" width="39.5" height="1.6" fill="#BECCE0"/>
<rect x="40" y="84.26" width="1021" height="1" fill="#DCE1EC"/>
<rect x="0" y="83.96" width="39.5" height="1.6" fill="#BECCE0"/>
<rect x="40" y="112.64" width="1021" height="1" fill="#DCE1EC"/>
<rect x="0" y="112.34" width="39.5" height="1.6" fill="#BECCE0"/>
<rect x="40" y="141.02" width="1021" height="1" fill="#DCE1EC"/>
<rect x="0" y="140.72" width="39.5" height="1.6" fill="#BECCE0"/>
<rect x="40" y="169.40" width="1021" height="1" fill="#DCE1EC"/>
<rect x="0" y="169.10" width="39.5" height="1.6" fill="#BECCE0"/>
<rect x="40" y="197.78" width="1021" height="1" fill="#DCE1EC"/>
<rect x="0" y="197.48" width="39.5" height="1.6" fill="#BECCE0"/>
<rect x="40" y="226.16" width="1021" height="1" fill="#DCE1EC"/>
<rect x="0" y="225.86" width="39.5" height="1.6" fill="#BECCE0"/>
<rect x="40" y="254.54" width="1021" height="1" fill="#DCE1EC"/>
<rect x="0" y="254.24" width="39.5" height="1.6" fill="#BECCE0"/>
<rect x="40" y="282.92" width="1021" height="1" fill="#DCE1EC"/>
<rect x="0" y="282.62" width="39.5" height="1.6" fill="#BECCE0"/>
<rect x="40" y="311.30" width="1021" height="1" fill="#DCE1EC"/>
<rect x="0" y="311.00" width="39.5" height="1.6" fill="#BECCE0"/>
<rect x="40" y="339.68" width="1021" height="1" fill="#DCE1EC"/>
<rect x="0" y="339.38" width="39.5" height="1.6" fill="#BECCE0"/>
<rect x="40" y="368.06" width="1021" height="1" fill="#DCE1EC"/>
<rect x="0" y="367.76" width="39.5" height="1.6" fill="#BECCE0"/>
<rect x="40" y="396.44" width="1021" height="1" fill="#DCE1EC"/>
<rect x="0" y="396.14" width="39.5" height="1.6" fill="#BECCE0"/>
<rect x="40" y="424.82" width="1021" height="1" fill="#DCE1EC"/>
<rect x="0" y="424.52" width="39.5" height="1.6" fill="#BECCE0"/>
<rect x="40" y="453.20" width="1021" height="1" fill="#DCE1EC"/>
<rect x="0" y="452.90" width="39.5" height="1.6" fill="#BECCE0"/>
<rect x="40" y="481.58" width="1021" height="1" fill="#DCE1EC"/>
<rect x="0" y="481.28" width="39.5" height="1.6" fill="#BECCE0"/>
<rect x="40" y="509.96" width="1021" height="1" fill="#DCE1EC"/>
<rect x="0" y="509.66" width="39.5" height="1.6" fill="#BECCE0"/>
<rect x="40" y="538.34" width="1021" height="1" fill="#DCE1EC"/>
<rect x="0" y="538.04" width="39.5" height="1.6" fill="#BECCE0"/>
<rect x="40" y="566.72" width="1021" height="1" fill="#DCE1EC"/>
<rect x="0" y="566.42" width="39.5" height="1.6" fill="#BECCE0"/>
<rect x="162.3" y="28.00" width="1" height="659" fill="#DCE1EC"/>
<rect x="277.1" y="28.00" width="1" height="659" fill="#DCE1EC"/>
<rect x="396.1" y="28.00" width="1" height="659" fill="#DCE1EC"/>
<rect x="525.9" y="28.00" width="1" height="659" fill="#DCE1EC"/>
<rect x="652.9" y="28.00" width="1" height="659" fill="#DCE1EC"/>
<rect x="798.9" y="28.00" width="1" height="659" fill="#DCE1EC"/>
<rect x="921.9" y="28.00" width="1" height="659" fill="#DCE1EC"/>
<rect x="1056.1" y="28.00" width="1" height="659" fill="#DCE1EC"/>
<rect x="40.7" y="28.30000000000001" width="1016" height="28.3" fill="#FFEB9C"/>
<path d="M1061,169.60 H1058.2 V198.58 H1061" fill="none" stroke="#000" stroke-width="1.8"/></svg>
<div class="t" style="left:40px;width:123.30000000000001px;top:114.5px;font-size:18.6px;color:#233B52;text-align:center"><span style="display:inline-block;transform:scaleX(1.12)">A</span></div>
<div class="t" style="left:163.3px;width:114.80000000000001px;top:114.5px;font-size:18.6px;color:#233B52;text-align:center"><span style="display:inline-block;transform:scaleX(1.12)">B</span></div>
<div class="t" style="left:278.1px;width:119.0px;top:114.5px;font-size:18.6px;color:#233B52;text-align:center"><span style="display:inline-block;transform:scaleX(1.12)">C</span></div>
<div class="t" style="left:397.1px;width:129.79999999999995px;top:114.5px;font-size:18.6px;color:#233B52;text-align:center"><span style="display:inline-block;transform:scaleX(1.12)">D</span></div>
<div class="t" style="left:526.9px;width:127.0px;top:114.5px;font-size:18.6px;color:#233B52;text-align:center"><span style="display:inline-block;transform:scaleX(1.12)">E</span></div>
<div class="t" style="left:653.9px;width:146.0px;top:114.5px;font-size:18.6px;color:#233B52;text-align:center"><span style="display:inline-block;transform:scaleX(1.12)">F</span></div>
<div class="t" style="left:799.9px;width:123.0px;top:114.5px;font-size:18.6px;color:#233B52;text-align:center"><span style="display:inline-block;transform:scaleX(1.12)">G</span></div>
<div class="t" style="left:922.9px;width:134.19999999999993px;top:114.5px;font-size:18.6px;color:#233B52;text-align:center"><span style="display:inline-block;transform:scaleX(1.12)">H</span></div>
<div class="t" style="left:0;width:39px;top:142.5px;font-size:18px;color:#233B52;text-align:center"><span style="display:inline-block;transform:scaleX(1.18)">1</span></div>
<div class="t" style="left:40px;width:123.30000000000001px;top:142.5px;font-size:18px;color:#9C6500;text-align:center"><span style="display:inline-block;transform:scaleX(1.232)">Idnumber</span></div>
<div class="t" style="left:163.3px;width:114.80000000000001px;top:142.5px;font-size:18px;color:#9C6500;text-align:center"><span style="display:inline-block;transform:scaleX(1.13)">Age</span></div>
<div class="t" style="left:278.1px;width:119.0px;top:142.5px;font-size:18px;color:#9C6500;text-align:center"><span style="display:inline-block;transform:scaleX(1.13)">Gender</span></div>
<div class="t" style="left:397.1px;width:129.79999999999995px;top:142.5px;font-size:18px;color:#9C6500;text-align:center"><span style="display:inline-block;transform:scaleX(1.13)">Diagnosis</span></div>
<div class="t" style="left:526.9px;width:127.0px;top:142.5px;font-size:18px;color:#9C6500;text-align:center"><span style="display:inline-block;transform:scaleX(1.206)">AdmBarthel</span></div>
<div class="t" style="left:653.9px;width:146.0px;top:142.5px;font-size:18px;color:#9C6500;text-align:center"><span style="display:inline-block;transform:scaleX(1.162)">DischBarthel</span></div>
<div class="t" style="left:799.9px;width:123.0px;top:142.5px;font-size:18px;color:#9C6500;text-align:center"><span style="display:inline-block;transform:scaleX(1.18)">AdmQoL</span></div>
<div class="t" style="left:922.9px;width:134.19999999999993px;top:142.5px;font-size:18px;color:#9C6500;text-align:center"><span style="display:inline-block;transform:scaleX(1.117)">DischQoL</span></div>
<div class="t" style="left:0;width:39px;top:170.9px;font-size:18px;color:#233B52;text-align:center"><span style="display:inline-block;transform:scaleX(1.18)">2</span></div>
<div class="t" style="left:40px;width:123.30000000000001px;top:170.9px;font-size:18px;color:#000;text-align:center"><span style="display:inline-block;transform:scaleX(1.13)">1</span></div>
<div class="t" style="left:163.3px;width:114.80000000000001px;top:170.9px;font-size:18px;color:#000;text-align:center"><span style="display:inline-block;transform:scaleX(1.13)">55</span></div>
<div class="t" style="left:278.1px;width:119.0px;top:170.9px;font-size:18px;color:#000;text-align:center"><span style="display:inline-block;transform:scaleX(1.232)">Male</span></div>
<div class="t" style="left:397.1px;width:129.79999999999995px;top:170.9px;font-size:18px;color:#000;text-align:center"><span style="display:inline-block;transform:scaleX(1.13)">Stroke</span></div>
<div class="t" style="left:526.9px;width:127.0px;top:170.9px;font-size:18px;color:#000;text-align:center"><span style="display:inline-block;transform:scaleX(1.13)">35</span></div>
<div class="t" style="left:653.9px;width:146.0px;top:170.9px;font-size:18px;color:#000;text-align:center"><span style="display:inline-block;transform:scaleX(1.13)">55</span></div>
<div class="t" style="left:799.9px;width:123.0px;top:170.9px;font-size:18px;color:#000;text-align:center"><span style="display:inline-block;transform:scaleX(1.13)">45</span></div>
<div class="t" style="left:922.9px;width:134.19999999999993px;top:170.9px;font-size:18px;color:#000;text-align:center"><span style="display:inline-block;transform:scaleX(1.13)">56</span></div>
<div class="t" style="left:0;width:39px;top:199.3px;font-size:18px;color:#233B52;text-align:center"><span style="display:inline-block;transform:scaleX(1.18)">3</span></div>
<div class="t" style="left:40px;width:123.30000000000001px;top:199.3px;font-size:18px;color:#000;text-align:center"><span style="display:inline-block;transform:scaleX(1.13)">2</span></div>
<div class="t" style="left:163.3px;width:114.80000000000001px;top:199.3px;font-size:18px;color:#000;text-align:center"><span style="display:inline-block;transform:scaleX(1.13)">37</span></div>
<div class="t" style="left:278.1px;width:119.0px;top:199.3px;font-size:18px;color:#000;text-align:center"><span style="display:inline-block;transform:scaleX(1.13)">Female</span></div>
<div class="t" style="left:397.1px;width:129.79999999999995px;top:199.3px;font-size:18px;color:#000;text-align:center"><span style="display:inline-block;transform:scaleX(1.13)">Cancer</span></div>
<div class="t" style="left:526.9px;width:127.0px;top:199.3px;font-size:18px;color:#000;text-align:center"><span style="display:inline-block;transform:scaleX(1.13)">64</span></div>
<div class="t" style="left:653.9px;width:146.0px;top:199.3px;font-size:18px;color:#000;text-align:center"><span style="display:inline-block;transform:scaleX(1.13)">86</span></div>
<div class="t" style="left:799.9px;width:123.0px;top:199.3px;font-size:18px;color:#000;text-align:center"><span style="display:inline-block;transform:scaleX(1.13)">72</span></div>
<div class="t" style="left:922.9px;width:134.19999999999993px;top:199.3px;font-size:18px;color:#000;text-align:center"><span style="display:inline-block;transform:scaleX(1.13)">95</span></div>
<div class="t" style="left:0;width:39px;top:227.6px;font-size:18px;color:#233B52;text-align:center"><span style="display:inline-block;transform:scaleX(1.18)">4</span></div>
<div class="t" style="left:40px;width:123.30000000000001px;top:227.6px;font-size:18px;color:#000;text-align:center"><span style="display:inline-block;transform:scaleX(1.13)">3</span></div>
<div class="t" style="left:163.3px;width:114.80000000000001px;top:227.6px;font-size:18px;color:#000;text-align:center"><span style="display:inline-block;transform:scaleX(1.13)">89</span></div>
<div class="t" style="left:278.1px;width:119.0px;top:227.6px;font-size:18px;color:#000;text-align:center"><span style="display:inline-block;transform:scaleX(1.13)">Female</span></div>
<div class="t" style="left:397.1px;width:129.79999999999995px;top:227.6px;font-size:18px;color:#000;text-align:center"><span style="display:inline-block;transform:scaleX(1.13)">Cancer</span></div>
<div class="t" style="left:526.9px;width:127.0px;top:227.6px;font-size:18px;color:#000;text-align:center"><span style="display:inline-block;transform:scaleX(1.13)">32</span></div>
<div class="t" style="left:653.9px;width:146.0px;top:227.6px;font-size:18px;color:#000;text-align:center"><span style="display:inline-block;transform:scaleX(1.13)">55</span></div>
<div class="t" style="left:799.9px;width:123.0px;top:227.6px;font-size:18px;color:#000;text-align:center"><span style="display:inline-block;transform:scaleX(1.13)">41</span></div>
<div class="t" style="left:922.9px;width:134.19999999999993px;top:227.6px;font-size:18px;color:#000;text-align:center"><span style="display:inline-block;transform:scaleX(1.13)">48</span></div>
<div class="t" style="left:0;width:39px;top:256.0px;font-size:18px;color:#233B52;text-align:center"><span style="display:inline-block;transform:scaleX(1.18)">5</span></div>
<div class="t" style="left:40px;width:123.30000000000001px;top:256.0px;font-size:18px;color:#000;text-align:center"><span style="display:inline-block;transform:scaleX(1.13)">4</span></div>
<div class="t" style="left:163.3px;width:114.80000000000001px;top:256.0px;font-size:18px;color:#000;text-align:center"><span style="display:inline-block;transform:scaleX(1.13)">65</span></div>
<div class="t" style="left:278.1px;width:119.0px;top:256.0px;font-size:18px;color:#000;text-align:center"><span style="display:inline-block;transform:scaleX(1.13)">Female</span></div>
<div class="t" style="left:397.1px;width:129.79999999999995px;top:256.0px;font-size:18px;color:#000;text-align:center"><span style="display:inline-block;transform:scaleX(1.13)">Stroke</span></div>
<div class="t" style="left:526.9px;width:127.0px;top:256.0px;font-size:18px;color:#000;text-align:center"><span style="display:inline-block;transform:scaleX(1.13)">12</span></div>
<div class="t" style="left:653.9px;width:146.0px;top:256.0px;font-size:18px;color:#000;text-align:center"><span style="display:inline-block;transform:scaleX(1.13)">52</span></div>
<div class="t" style="left:799.9px;width:123.0px;top:256.0px;font-size:18px;color:#000;text-align:center"><span style="display:inline-block;transform:scaleX(1.13)">20</span></div>
<div class="t" style="left:922.9px;width:134.19999999999993px;top:256.0px;font-size:18px;color:#000;text-align:center"><span style="display:inline-block;transform:scaleX(1.13)">52</span></div>
<div class="t" style="left:0;width:39px;top:284.4px;font-size:18px;color:#233B52;text-align:center"><span style="display:inline-block;transform:scaleX(1.18)">6</span></div>
<div class="t" style="left:40px;width:123.30000000000001px;top:284.4px;font-size:18px;color:#000;text-align:center"><span style="display:inline-block;transform:scaleX(1.13)">5</span></div>
<div class="t" style="left:163.3px;width:114.80000000000001px;top:284.4px;font-size:18px;color:#000;text-align:center"><span style="display:inline-block;transform:scaleX(1.13)">76</span></div>
<div class="t" style="left:278.1px;width:119.0px;top:284.4px;font-size:18px;color:#000;text-align:center"><span style="display:inline-block;transform:scaleX(1.232)">Male</span></div>
<div class="t" style="left:397.1px;width:129.79999999999995px;top:284.4px;font-size:18px;color:#000;text-align:center"><span style="display:inline-block;transform:scaleX(1.13)">Stroke</span></div>
<div class="t" style="left:526.9px;width:127.0px;top:284.4px;font-size:18px;color:#000;text-align:center"><span style="display:inline-block;transform:scaleX(1.13)">34</span></div>
<div class="t" style="left:653.9px;width:146.0px;top:284.4px;font-size:18px;color:#000;text-align:center"><span style="display:inline-block;transform:scaleX(1.13)">87</span></div>
<div class="t" style="left:799.9px;width:123.0px;top:284.4px;font-size:18px;color:#000;text-align:center"><span style="display:inline-block;transform:scaleX(1.13)">40</span></div>
<div class="t" style="left:922.9px;width:134.19999999999993px;top:284.4px;font-size:18px;color:#000;text-align:center"><span style="display:inline-block;transform:scaleX(1.13)">81</span></div>
<div class="t" style="left:0;width:39px;top:312.8px;font-size:18px;color:#233B52;text-align:center"><span style="display:inline-block;transform:scaleX(1.18)">7</span></div>
<div class="t" style="left:40px;width:123.30000000000001px;top:312.8px;font-size:18px;color:#000;text-align:center"><span style="display:inline-block;transform:scaleX(1.13)">6</span></div>
<div class="t" style="left:163.3px;width:114.80000000000001px;top:312.8px;font-size:18px;color:#000;text-align:center"><span style="display:inline-block;transform:scaleX(1.13)">35</span></div>
<div class="t" style="left:278.1px;width:119.0px;top:312.8px;font-size:18px;color:#000;text-align:center"><span style="display:inline-block;transform:scaleX(1.13)">Female</span></div>
<div class="t" style="left:397.1px;width:129.79999999999995px;top:312.8px;font-size:18px;color:#000;text-align:center"><span style="display:inline-block;transform:scaleX(1.13)">Cancer</span></div>
<div class="t" style="left:526.9px;width:127.0px;top:312.8px;font-size:18px;color:#000;text-align:center"><span style="display:inline-block;transform:scaleX(1.13)">34</span></div>
<div class="t" style="left:653.9px;width:146.0px;top:312.8px;font-size:18px;color:#000;text-align:center"><span style="display:inline-block;transform:scaleX(1.13)">65</span></div>
<div class="t" style="left:799.9px;width:123.0px;top:312.8px;font-size:18px;color:#000;text-align:center"><span style="display:inline-block;transform:scaleX(1.13)">32</span></div>
<div class="t" style="left:922.9px;width:134.19999999999993px;top:312.8px;font-size:18px;color:#000;text-align:center"><span style="display:inline-block;transform:scaleX(1.13)">74</span></div>
<div class="t" style="left:0;width:39px;top:341.2px;font-size:18px;color:#233B52;text-align:center"><span style="display:inline-block;transform:scaleX(1.18)">8</span></div>
<div class="t" style="left:40px;width:123.30000000000001px;top:341.2px;font-size:18px;color:#000;text-align:center"><span style="display:inline-block;transform:scaleX(1.13)">7</span></div>
<div class="t" style="left:163.3px;width:114.80000000000001px;top:341.2px;font-size:18px;color:#000;text-align:center"><span style="display:inline-block;transform:scaleX(1.13)">75</span></div>
<div class="t" style="left:278.1px;width:119.0px;top:341.2px;font-size:18px;color:#000;text-align:center"><span style="display:inline-block;transform:scaleX(1.13)">Female</span></div>
<div class="t" style="left:397.1px;width:129.79999999999995px;top:341.2px;font-size:18px;color:#000;text-align:center"><span style="display:inline-block;transform:scaleX(1.13)">Cancer</span></div>
<div class="t" style="left:526.9px;width:127.0px;top:341.2px;font-size:18px;color:#000;text-align:center"><span style="display:inline-block;transform:scaleX(1.13)">66</span></div>
<div class="t" style="left:653.9px;width:146.0px;top:341.2px;font-size:18px;color:#000;text-align:center"><span style="display:inline-block;transform:scaleX(1.13)">0</span></div>
<div class="t" style="left:799.9px;width:123.0px;top:341.2px;font-size:18px;color:#000;text-align:center"><span style="display:inline-block;transform:scaleX(1.13)">55</span></div>
<div class="t" style="left:922.9px;width:134.19999999999993px;top:341.2px;font-size:18px;color:#000;text-align:center"><span style="display:inline-block;transform:scaleX(1.13)">0</span></div>
<div class="t" style="left:0;width:39px;top:369.5px;font-size:18px;color:#233B52;text-align:center"><span style="display:inline-block;transform:scaleX(1.18)">9</span></div>
<div class="t" style="left:40px;width:123.30000000000001px;top:369.5px;font-size:18px;color:#000;text-align:center"><span style="display:inline-block;transform:scaleX(1.13)">8</span></div>
<div class="t" style="left:163.3px;width:114.80000000000001px;top:369.5px;font-size:18px;color:#000;text-align:center"><span style="display:inline-block;transform:scaleX(1.13)">91</span></div>
<div class="t" style="left:278.1px;width:119.0px;top:369.5px;font-size:18px;color:#000;text-align:center"><span style="display:inline-block;transform:scaleX(1.13)">Female</span></div>
<div class="t" style="left:397.1px;width:129.79999999999995px;top:369.5px;font-size:18px;color:#000;text-align:center"><span style="display:inline-block;transform:scaleX(1.13)">Stroke</span></div>
<div class="t" style="left:526.9px;width:127.0px;top:369.5px;font-size:18px;color:#000;text-align:center"><span style="display:inline-block;transform:scaleX(1.13)">52</span></div>
<div class="t" style="left:653.9px;width:146.0px;top:369.5px;font-size:18px;color:#000;text-align:center"><span style="display:inline-block;transform:scaleX(1.13)">43</span></div>
<div class="t" style="left:799.9px;width:123.0px;top:369.5px;font-size:18px;color:#000;text-align:center"><span style="display:inline-block;transform:scaleX(1.13)">49</span></div>
<div class="t" style="left:922.9px;width:134.19999999999993px;top:369.5px;font-size:18px;color:#000;text-align:center"><span style="display:inline-block;transform:scaleX(1.13)">35</span></div>
<div class="t" style="left:0;width:39px;top:397.9px;font-size:18px;color:#233B52;text-align:center"><span style="display:inline-block;transform:scaleX(1.18)">10</span></div>
<div class="t" style="left:40px;width:123.30000000000001px;top:397.9px;font-size:18px;color:#000;text-align:center"><span style="display:inline-block;transform:scaleX(1.13)">9</span></div>
<div class="t" style="left:163.3px;width:114.80000000000001px;top:397.9px;font-size:18px;color:#000;text-align:center"><span style="display:inline-block;transform:scaleX(1.13)">76</span></div>
<div class="t" style="left:278.1px;width:119.0px;top:397.9px;font-size:18px;color:#000;text-align:center"><span style="display:inline-block;transform:scaleX(1.13)">Female</span></div>
<div class="t" style="left:397.1px;width:129.79999999999995px;top:397.9px;font-size:18px;color:#000;text-align:center"><span style="display:inline-block;transform:scaleX(1.13)">Stroke</span></div>
<div class="t" style="left:526.9px;width:127.0px;top:397.9px;font-size:18px;color:#000;text-align:center"><span style="display:inline-block;transform:scaleX(1.13)">37</span></div>
<div class="t" style="left:653.9px;width:146.0px;top:397.9px;font-size:18px;color:#000;text-align:center"><span style="display:inline-block;transform:scaleX(1.13)">46</span></div>
<div class="t" style="left:799.9px;width:123.0px;top:397.9px;font-size:18px;color:#000;text-align:center"><span style="display:inline-block;transform:scaleX(1.13)">41</span></div>
<div class="t" style="left:922.9px;width:134.19999999999993px;top:397.9px;font-size:18px;color:#000;text-align:center"><span style="display:inline-block;transform:scaleX(1.13)">49</span></div>
<div class="t" style="left:0;width:39px;top:426.3px;font-size:18px;color:#233B52;text-align:center"><span style="display:inline-block;transform:scaleX(1.18)">11</span></div>
<div class="t" style="left:40px;width:123.30000000000001px;top:426.3px;font-size:18px;color:#000;text-align:center"><span style="display:inline-block;transform:scaleX(1.13)">10</span></div>
<div class="t" style="left:163.3px;width:114.80000000000001px;top:426.3px;font-size:18px;color:#000;text-align:center"><span style="display:inline-block;transform:scaleX(1.13)">79</span></div>
<div class="t" style="left:278.1px;width:119.0px;top:426.3px;font-size:18px;color:#000;text-align:center"><span style="display:inline-block;transform:scaleX(1.232)">Male</span></div>
<div class="t" style="left:397.1px;width:129.79999999999995px;top:426.3px;font-size:18px;color:#000;text-align:center"><span style="display:inline-block;transform:scaleX(1.13)">Cancer</span></div>
<div class="t" style="left:526.9px;width:127.0px;top:426.3px;font-size:18px;color:#000;text-align:center"><span style="display:inline-block;transform:scaleX(1.13)">45</span></div>
<div class="t" style="left:653.9px;width:146.0px;top:426.3px;font-size:18px;color:#000;text-align:center"><span style="display:inline-block;transform:scaleX(1.13)">77</span></div>
<div class="t" style="left:799.9px;width:123.0px;top:426.3px;font-size:18px;color:#000;text-align:center"><span style="display:inline-block;transform:scaleX(1.13)">38</span></div>
<div class="t" style="left:922.9px;width:134.19999999999993px;top:426.3px;font-size:18px;color:#000;text-align:center"><span style="display:inline-block;transform:scaleX(1.13)">81</span></div>
<div class="t" style="left:0;width:39px;top:454.7px;font-size:18px;color:#233B52;text-align:center"><span style="display:inline-block;transform:scaleX(1.18)">12</span></div>
<div class="t" style="left:40px;width:123.30000000000001px;top:454.7px;font-size:18px;color:#000;text-align:center"><span style="display:inline-block;transform:scaleX(1.13)">11</span></div>
<div class="t" style="left:163.3px;width:114.80000000000001px;top:454.7px;font-size:18px;color:#000;text-align:center"><span style="display:inline-block;transform:scaleX(1.13)">73</span></div>
<div class="t" style="left:278.1px;width:119.0px;top:454.7px;font-size:18px;color:#000;text-align:center"><span style="display:inline-block;transform:scaleX(1.232)">Male</span></div>
<div class="t" style="left:397.1px;width:129.79999999999995px;top:454.7px;font-size:18px;color:#000;text-align:center"><span style="display:inline-block;transform:scaleX(1.13)">Cancer</span></div>
<div class="t" style="left:526.9px;width:127.0px;top:454.7px;font-size:18px;color:#000;text-align:center"><span style="display:inline-block;transform:scaleX(1.13)">26</span></div>
<div class="t" style="left:653.9px;width:146.0px;top:454.7px;font-size:18px;color:#000;text-align:center"><span style="display:inline-block;transform:scaleX(1.13)">48</span></div>
<div class="t" style="left:799.9px;width:123.0px;top:454.7px;font-size:18px;color:#000;text-align:center"><span style="display:inline-block;transform:scaleX(1.13)">33</span></div>
<div class="t" style="left:922.9px;width:134.19999999999993px;top:454.7px;font-size:18px;color:#000;text-align:center"><span style="display:inline-block;transform:scaleX(1.13)">55</span></div>
<div class="t" style="left:0;width:39px;top:483.1px;font-size:18px;color:#233B52;text-align:center"><span style="display:inline-block;transform:scaleX(1.18)">13</span></div>
<div class="t" style="left:40px;width:123.30000000000001px;top:483.1px;font-size:18px;color:#000;text-align:center"><span style="display:inline-block;transform:scaleX(1.13)">12</span></div>
<div class="t" style="left:163.3px;width:114.80000000000001px;top:483.1px;font-size:18px;color:#000;text-align:center"><span style="display:inline-block;transform:scaleX(1.13)">62</span></div>
<div class="t" style="left:278.1px;width:119.0px;top:483.1px;font-size:18px;color:#000;text-align:center"><span style="display:inline-block;transform:scaleX(1.13)">Female</span></div>
<div class="t" style="left:397.1px;width:129.79999999999995px;top:483.1px;font-size:18px;color:#000;text-align:center"><span style="display:inline-block;transform:scaleX(1.13)">Stroke</span></div>
<div class="t" style="left:526.9px;width:127.0px;top:483.1px;font-size:18px;color:#000;text-align:center"><span style="display:inline-block;transform:scaleX(1.13)">22</span></div>
<div class="t" style="left:653.9px;width:146.0px;top:483.1px;font-size:18px;color:#000;text-align:center"><span style="display:inline-block;transform:scaleX(1.13)">52</span></div>
<div class="t" style="left:799.9px;width:123.0px;top:483.1px;font-size:18px;color:#000;text-align:center"><span style="display:inline-block;transform:scaleX(1.13)">25</span></div>
<div class="t" style="left:922.9px;width:134.19999999999993px;top:483.1px;font-size:18px;color:#000;text-align:center"><span style="display:inline-block;transform:scaleX(1.13)">46</span></div>
<div class="t" style="left:0;width:39px;top:511.4px;font-size:18px;color:#233B52;text-align:center"><span style="display:inline-block;transform:scaleX(1.18)">14</span></div>
<div class="t" style="left:40px;width:123.30000000000001px;top:511.4px;font-size:18px;color:#000;text-align:center"><span style="display:inline-block;transform:scaleX(1.13)">13</span></div>
<div class="t" style="left:163.3px;width:114.80000000000001px;top:511.4px;font-size:18px;color:#000;text-align:center"><span style="display:inline-block;transform:scaleX(1.13)">81</span></div>
<div class="t" style="left:278.1px;width:119.0px;top:511.4px;font-size:18px;color:#000;text-align:center"><span style="display:inline-block;transform:scaleX(1.13)">Female</span></div>
<div class="t" style="left:397.1px;width:129.79999999999995px;top:511.4px;font-size:18px;color:#000;text-align:center"><span style="display:inline-block;transform:scaleX(1.13)">Cancer</span></div>
<div class="t" style="left:526.9px;width:127.0px;top:511.4px;font-size:18px;color:#000;text-align:center"><span style="display:inline-block;transform:scaleX(1.13)">18</span></div>
<div class="t" style="left:653.9px;width:146.0px;top:511.4px;font-size:18px;color:#000;text-align:center"><span style="display:inline-block;transform:scaleX(1.13)">49</span></div>
<div class="t" style="left:799.9px;width:123.0px;top:511.4px;font-size:18px;color:#000;text-align:center"><span style="display:inline-block;transform:scaleX(1.13)">29</span></div>
<div class="t" style="left:922.9px;width:134.19999999999993px;top:511.4px;font-size:18px;color:#000;text-align:center"><span style="display:inline-block;transform:scaleX(1.13)">51</span></div>
<div class="t" style="left:0;width:39px;top:539.8px;font-size:18px;color:#233B52;text-align:center"><span style="display:inline-block;transform:scaleX(1.18)">15</span></div>
<div class="t" style="left:40px;width:123.30000000000001px;top:539.8px;font-size:18px;color:#000;text-align:center"><span style="display:inline-block;transform:scaleX(1.13)">14</span></div>
<div class="t" style="left:163.3px;width:114.80000000000001px;top:539.8px;font-size:18px;color:#000;text-align:center"><span style="display:inline-block;transform:scaleX(1.13)">59</span></div>
<div class="t" style="left:278.1px;width:119.0px;top:539.8px;font-size:18px;color:#000;text-align:center"><span style="display:inline-block;transform:scaleX(1.13)">Female</span></div>
<div class="t" style="left:397.1px;width:129.79999999999995px;top:539.8px;font-size:18px;color:#000;text-align:center"><span style="display:inline-block;transform:scaleX(1.13)">Cancer</span></div>
<div class="t" style="left:526.9px;width:127.0px;top:539.8px;font-size:18px;color:#000;text-align:center"><span style="display:inline-block;transform:scaleX(1.13)">62</span></div>
<div class="t" style="left:653.9px;width:146.0px;top:539.8px;font-size:18px;color:#000;text-align:center"><span style="display:inline-block;transform:scaleX(1.13)">99</span></div>
<div class="t" style="left:799.9px;width:123.0px;top:539.8px;font-size:18px;color:#000;text-align:center"><span style="display:inline-block;transform:scaleX(1.13)">68</span></div>
<div class="t" style="left:922.9px;width:134.19999999999993px;top:539.8px;font-size:18px;color:#000;text-align:center"><span style="display:inline-block;transform:scaleX(1.13)">89</span></div>
<div class="t" style="left:0;width:39px;top:568.2px;font-size:18px;color:#233B52;text-align:center"><span style="display:inline-block;transform:scaleX(1.18)">16</span></div>
<div class="t" style="left:40px;width:123.30000000000001px;top:568.2px;font-size:18px;color:#000;text-align:center"><span style="display:inline-block;transform:scaleX(1.13)">15</span></div>
<div class="t" style="left:163.3px;width:114.80000000000001px;top:568.2px;font-size:18px;color:#000;text-align:center"><span style="display:inline-block;transform:scaleX(1.13)">66</span></div>
<div class="t" style="left:278.1px;width:119.0px;top:568.2px;font-size:18px;color:#000;text-align:center"><span style="display:inline-block;transform:scaleX(1.13)">Female</span></div>
<div class="t" style="left:397.1px;width:129.79999999999995px;top:568.2px;font-size:18px;color:#000;text-align:center"><span style="display:inline-block;transform:scaleX(1.13)">Stroke</span></div>
<div class="t" style="left:526.9px;width:127.0px;top:568.2px;font-size:18px;color:#000;text-align:center"><span style="display:inline-block;transform:scaleX(1.13)">58</span></div>
<div class="t" style="left:653.9px;width:146.0px;top:568.2px;font-size:18px;color:#000;text-align:center"><span style="display:inline-block;transform:scaleX(1.13)">82</span></div>
<div class="t" style="left:799.9px;width:123.0px;top:568.2px;font-size:18px;color:#000;text-align:center"><span style="display:inline-block;transform:scaleX(1.13)">52</span></div>
<div class="t" style="left:922.9px;width:134.19999999999993px;top:568.2px;font-size:18px;color:#000;text-align:center"><span style="display:inline-block;transform:scaleX(1.13)">89</span></div>
<div class="t" style="left:0;width:39px;top:596.6px;font-size:18px;color:#233B52;text-align:center"><span style="display:inline-block;transform:scaleX(1.18)">17</span></div>
<div class="t" style="left:40px;width:123.30000000000001px;top:596.6px;font-size:18px;color:#000;text-align:center"><span style="display:inline-block;transform:scaleX(1.13)">16</span></div>
<div class="t" style="left:163.3px;width:114.80000000000001px;top:596.6px;font-size:18px;color:#000;text-align:center"><span style="display:inline-block;transform:scaleX(1.13)">88</span></div>
<div class="t" style="left:278.1px;width:119.0px;top:596.6px;font-size:18px;color:#000;text-align:center"><span style="display:inline-block;transform:scaleX(1.232)">Male</span></div>
<div class="t" style="left:397.1px;width:129.79999999999995px;top:596.6px;font-size:18px;color:#000;text-align:center"><span style="display:inline-block;transform:scaleX(1.13)">Cancer</span></div>
<div class="t" style="left:526.9px;width:127.0px;top:596.6px;font-size:18px;color:#000;text-align:center"><span style="display:inline-block;transform:scaleX(1.13)">108</span></div>
<div class="t" style="left:653.9px;width:146.0px;top:596.6px;font-size:18px;color:#000;text-align:center"><span style="display:inline-block;transform:scaleX(1.13)">55</span></div>
<div class="t" style="left:799.9px;width:123.0px;top:596.6px;font-size:18px;color:#000;text-align:center"><span style="display:inline-block;transform:scaleX(1.13)">28</span></div>
<div class="t" style="left:922.9px;width:134.19999999999993px;top:596.6px;font-size:18px;color:#000;text-align:center"><span style="display:inline-block;transform:scaleX(1.13)">67</span></div>
<div class="t" style="left:0;width:39px;top:625.0px;font-size:18px;color:#233B52;text-align:center"><span style="display:inline-block;transform:scaleX(1.18)">18</span></div>
<div class="t" style="left:0;width:39px;top:653.3px;font-size:18px;color:#233B52;text-align:center"><span style="display:inline-block;transform:scaleX(1.18)">19</span></div></body></html>
